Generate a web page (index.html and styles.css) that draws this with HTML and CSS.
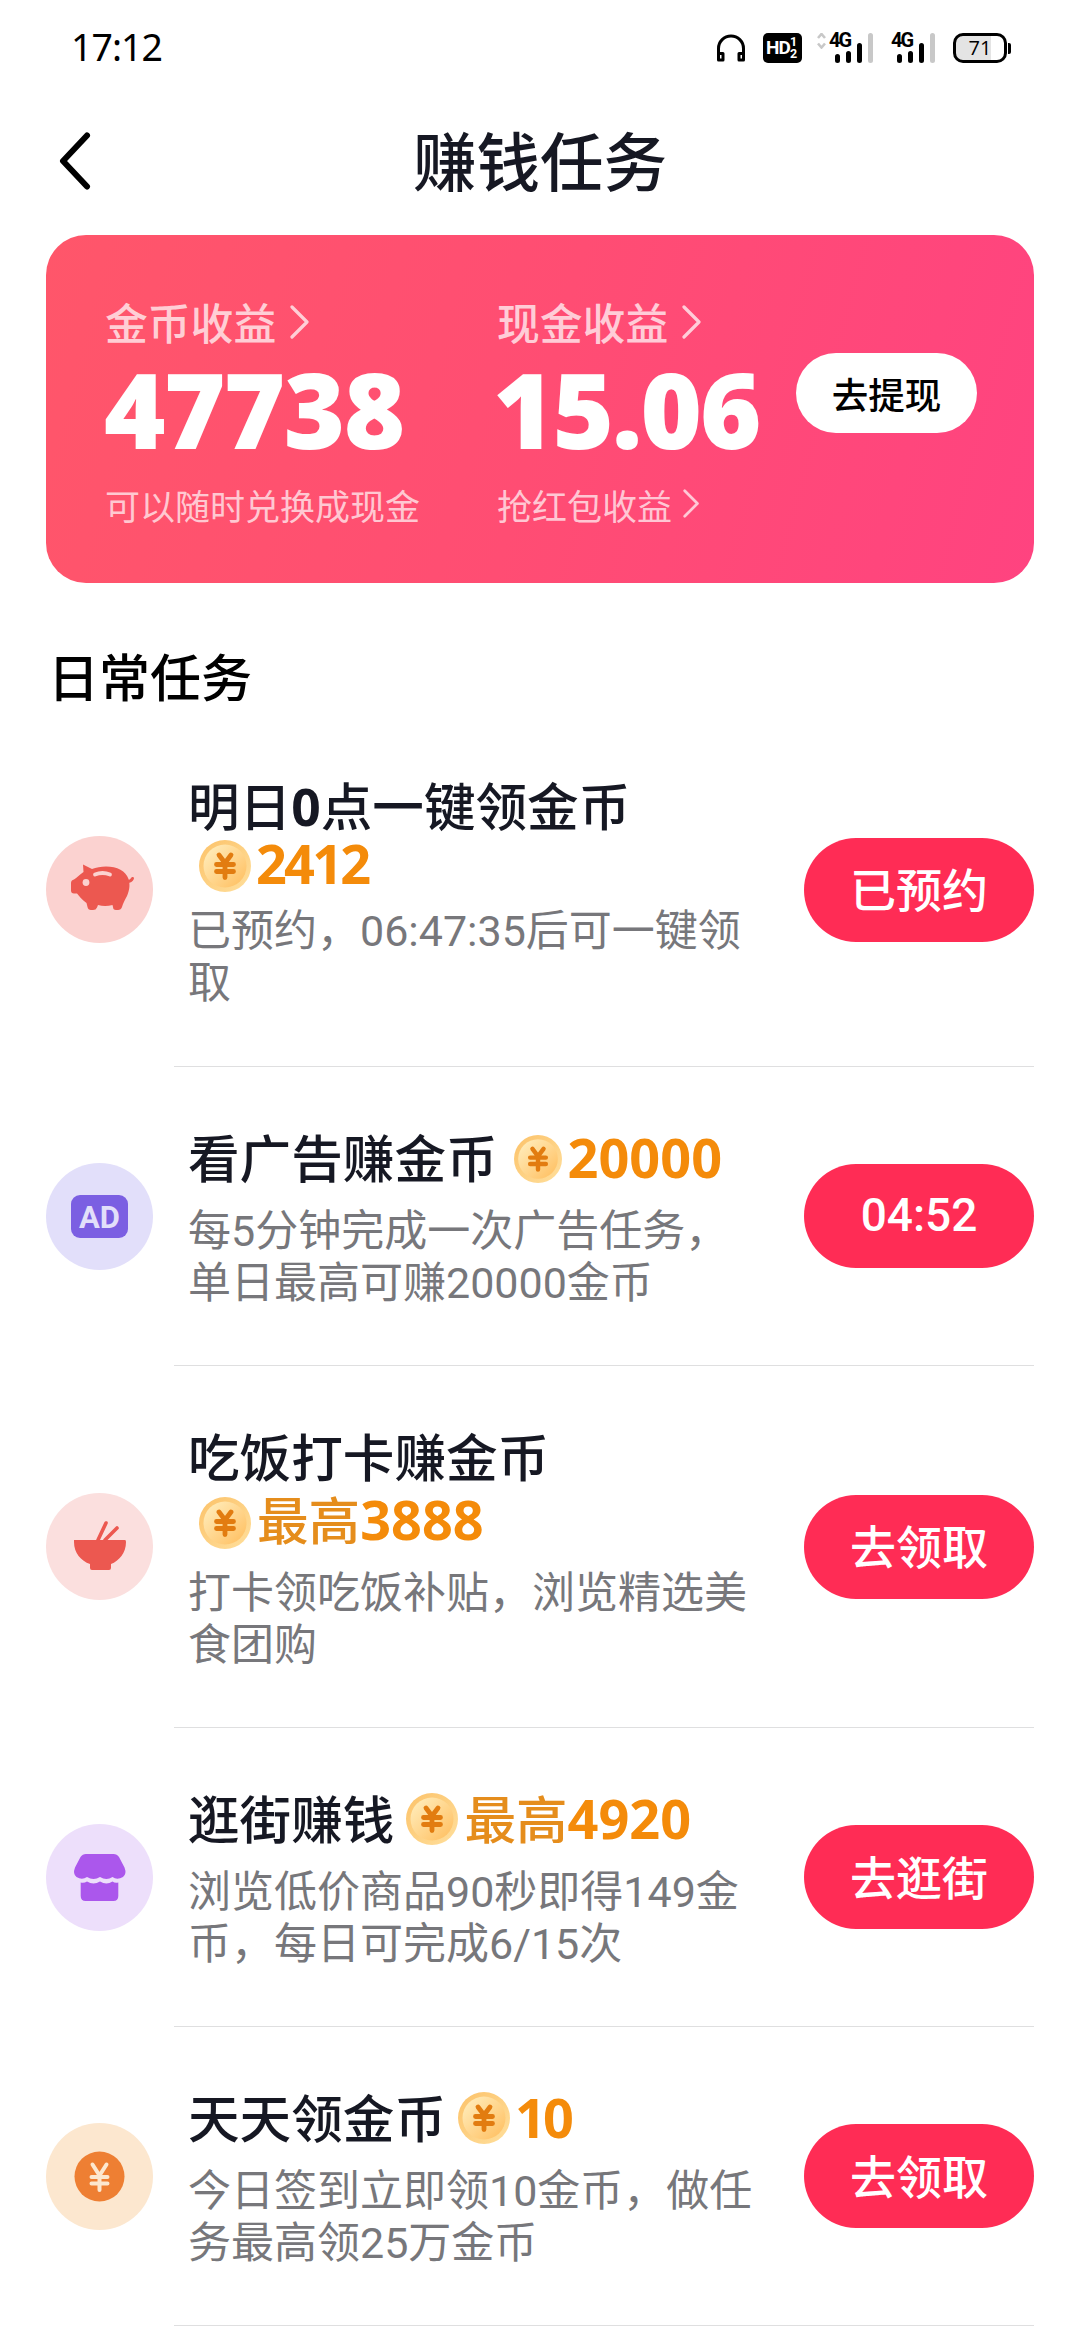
FILE: index.html
```html
<!DOCTYPE html>
<html lang="zh-CN">
<head>
<meta charset="utf-8">
<title>赚钱任务</title>
<link rel="stylesheet" href="styles.css">
</head>
<body>
<svg class="defs" width="0" height="0" aria-hidden="true">
  <defs>
    <linearGradient id="coin-face" x1="0" y1="0" x2="1" y2="1">
      <stop offset="0" stop-color="#fff0c2"/>
      <stop offset="1" stop-color="#ffbd5c"/>
    </linearGradient>
    <linearGradient id="coin-rim" x1="0" y1="0" x2="1" y2="1">
      <stop offset="0" stop-color="#fcc269"/>
      <stop offset="1" stop-color="#ffdf9c"/>
    </linearGradient>
    <symbol id="coin" viewBox="0 0 52 52">
      <circle cx="26" cy="26" r="26" fill="url(#coin-rim)"/>
      <circle cx="26" cy="26" r="21.500" fill="url(#coin-face)"/>
      <path d="M20 15l6 8 6-8M17.500 24.500h17M17.500 31.500h17M26 24v13.500" fill="none" stroke="#e27c10" stroke-width="4.800" stroke-linecap="round" stroke-linejoin="round"/>
    </symbol>
    <symbol id="chevron" viewBox="0 0 20 34">
      <path d="M2 2l15 15L2 32" fill="none" stroke="currentColor" stroke-width="3.200" stroke-linecap="round" stroke-linejoin="round"/>
    </symbol>
    <symbol id="signal" viewBox="0 0 38 30">
      <path d="M2.500 23.500v4M13.500 20.500v7M24.500 12.500v15" stroke="#000" stroke-width="5" stroke-linecap="round"/>
      <path d="M35.500 2.500v25" stroke="#c8c8c8" stroke-width="5" stroke-linecap="round"/>
    </symbol>
  </defs>
</svg>

<header class="status">
  <span class="clock">17:12</span>
  <div class="status-icons">
    <svg class="headphones" viewBox="0 0 28 28"><path d="M1.500 25V14.500a12.500 12.500 0 0 1 25 0V25" fill="none" stroke="#000" stroke-width="3"/><path d="M1.500 19.500h4.500v6.500H1.500zM22 19.500h4.500v6.500H22z" fill="#fff" stroke="#000" stroke-width="3" stroke-linejoin="round"/></svg>
    <span class="hd"><span class="hd-text">HD</span><span class="sims"><i>1</i><i>2</i></span></span>
    <span class="net net-arrows">
      <svg class="arrows" viewBox="0 0 9 16"><path d="M1 5l3.500-4L8 5M1 10.500l3.500 4 3.500-4" fill="none" stroke="#c8c8c8" stroke-width="2.600"/></svg>
      <b>4G</b><svg class="bars"><use href="#signal"/></svg>
    </span>
    <span class="net"><b>4G</b><svg class="bars"><use href="#signal"/></svg></span>
    <span class="battery"><span class="cell">71</span><span class="cap"></span></span>
  </div>
</header>

<nav class="topbar">
  <svg class="back" viewBox="0 0 32 58"><path d="M28 3.500L4 29l24 25.500" fill="none" stroke="#000" stroke-width="6" stroke-linecap="round" stroke-linejoin="round"/></svg>
  <h1>赚钱任务</h1>
</nav>

<section class="wallet">
  <div class="earn">
    <div class="label">金币收益<svg class="chev"><use href="#chevron"/></svg></div>
    <div class="sum">47738</div>
    <div class="hint">可以随时兑换成现金</div>
  </div>
  <div class="earn cash">
    <div class="label">现金收益<svg class="chev"><use href="#chevron"/></svg></div>
    <div class="sum">15.06</div>
    <div class="hint">抢红包收益<svg class="chev small" viewBox="0 0 20 34"><use href="#chevron"/></svg></div>
  </div>
  <button class="withdraw">去提现</button>
</section>

<h2>日常任务</h2>

<main class="tasks">
  <article class="task first">
    <svg class="icon" viewBox="0 0 107 107">
      <circle cx="53.500" cy="53.500" r="53.500" fill="#fbd2d0"/>
      <path d="M37 28.500L46 33C50 31.500 55 30.500 60 30.500C71 30.500 80 35 82.500 43C84 48 84 53 81 60C79 64 77 67 76 71Q75 74 72 74H70Q67 74 67 71L66.500 69Q59 71 52 69L51 71.500Q50 74 47 74H45Q42 74 41.500 71L40.500 67C36 64 33 60 31 57.500H28Q25 57.500 25 54.500V47Q25 44 28 43.500C31 42 33 39 37.500 36Z" fill="#ec5850"/>
      <path d="M80 45.500Q85 46 86.500 42.500" fill="none" stroke="#ec5850" stroke-width="3" stroke-linecap="round"/>
      <path d="M49 38.500Q56.500 35.500 64 38.500" fill="none" stroke="#fbd2d0" stroke-width="3.800" stroke-linecap="round"/>
      <circle cx="40" cy="46.500" r="3.400" fill="#fbd2d0"/>
    </svg>
    <div class="body">
      <h3>明日<b>0</b>点一键领金币<br><svg class="coin"><use href="#coin"/></svg><span class="amount tight">2412</span></h3>
      <p>已预约，06:47:35后可一键领<br>取</p>
    </div>
    <button class="go">已预约</button>
  </article>
  <hr>
  <article class="task">
    <svg class="icon" viewBox="0 0 107 107">
      <circle cx="53.500" cy="53.500" r="53.500" fill="#e2dffa"/>
      <rect x="25" y="32" width="57" height="43" rx="9" fill="#7b5fe2"/>
      <text x="53.500" y="64.500" text-anchor="middle" class="ad">AD</text>
    </svg>
    <div class="body">
      <h3>看广告赚金币<svg class="coin ad-coin" viewBox="0 0 52 52"><use href="#coin"/></svg><span class="amount">20000</span></h3>
      <p>每5分钟完成一次广告任务，<br>单日最高可赚20000金币</p>
    </div>
    <button class="go latin">04:52</button>
  </article>
  <hr>
  <article class="task tall">
    <svg class="icon" viewBox="0 0 107 107">
      <circle cx="53.500" cy="53.500" r="53.500" fill="#fbdfde"/>
      <path d="M28 47h51q1 0 1 2c0 11-7 19-15 22v4q0 2-2 2H46q-2 0-2-2v-4c-9-3-16-11-16-22z" fill="#ec5850"/>
      <path d="M52 47l8-17M59 47l12-12" stroke="#ec5850" stroke-width="3.600" stroke-linecap="round"/>
    </svg>
    <div class="body">
      <h3>吃饭打卡赚金币<br><svg class="coin"><use href="#coin"/></svg><span class="max">最高</span><span class="amount">3888</span></h3>
      <p>打卡领吃饭补贴，浏览精选美<br>食团购</p>
    </div>
    <button class="go">去领取</button>
  </article>
  <hr>
  <article class="task">
    <svg class="icon" viewBox="0 0 107 107">
      <circle cx="53.500" cy="53.500" r="53.500" fill="#eddffb"/>
      <path d="M40 30H67.500Q71 30 73 33L78.500 43.500Q81 50 77 53Q71 56.500 66.500 53Q60.500 57 54 53Q47.500 57 41 53Q36 56.500 30.500 53Q26.500 50 29 43.500L34.500 33Q36.500 30 40 30Z" fill="#ab57ec"/>
      <path d="M34.700 58.500Q38 59.500 41 57.500Q47.500 61.500 54 57.500Q60.500 61.500 66.500 57.500Q69 59.500 72.300 58.500V72Q72.300 77 67.300 77H39.700Q34.700 77 34.700 72Z" fill="#ab57ec"/>
    </svg>
    <div class="body">
      <h3>逛街赚钱<svg class="coin"><use href="#coin"/></svg><span class="max">最高</span><span class="amount">4920</span></h3>
      <p>浏览低价商品90秒即得149金<br>币，每日可完成6/15次</p>
    </div>
    <button class="go">去逛街</button>
  </article>
  <hr>
  <article class="task">
    <svg class="icon" viewBox="0 0 107 107">
      <circle cx="53.500" cy="53.500" r="53.500" fill="#fce7cf"/>
      <circle cx="53.500" cy="53.500" r="25" fill="#ee7f33"/>
      <path d="M46.500 41.500l7 11 7-11M45.500 54h16M45.500 60.500h16M53.500 53v14" fill="none" stroke="#fce7cf" stroke-width="4" stroke-linecap="round" stroke-linejoin="round"/>
    </svg>
    <div class="body">
      <h3>天天领金币<svg class="coin"><use href="#coin"/></svg><span class="amount tight">10</span></h3>
      <p>今日签到立即领10金币，做任<br>务最高领25万金币</p>
    </div>
    <button class="go">去领取</button>
  </article>
  <hr>
</main>
</body>
</html>
```
FILE: styles.css
```css
* { box-sizing: border-box; }
body {
  margin: 0;
  width: 1080px;
  height: 2340px;
  overflow: hidden;
  background: #fff;
  color: #161823;
  font-family: Roboto, "Noto Sans CJK SC", sans-serif;
}
h1, h2, h3, p { margin: 0; font-weight: 500; white-space: nowrap; }
button { border: 0; padding: 0; font: inherit; }
svg { display: block; flex: none; }
.defs { position: absolute; }

/* Status bar */
.status { height: 96px; padding: 0 69px 0 71px; display: flex; justify-content: space-between; align-items: center; color: #000; }
.clock { font: 400 37.5px/1 "Noto Sans", sans-serif; letter-spacing: -1px; margin-top: -2px; }
.status-icons { display: flex; align-items: center; height: 30px; }
.headphones { width: 28px; height: 28px; }
.hd { display: flex; width: 39px; height: 30px; margin-left: 18px; padding-left: 3px; border-radius: 5px; background: #000; color: #fff; align-items: center; white-space: nowrap; }
.hd-text { width: 24px; font: 700 19px/30px Roboto, sans-serif; letter-spacing: -1px; }
.sims { display: flex; flex-direction: column; width: 9px; font: 700 12.5px/12px Roboto, sans-serif; }
.sims i { font-style: normal; }
.net { display: grid; grid-template-columns: 9px 1fr; width: 44px; height: 30px; margin-left: 18px; }
.net b { grid-area: 1 / 1 / 2 / 3; font: 700 20px/15px Roboto, sans-serif; letter-spacing: -2px; }
.bars { grid-area: 1 / 1 / 2 / 3; width: 38px; height: 30px; margin-left: 6px; }
.net-arrows { width: 56px; margin-left: 15px; grid-template-columns: 12px 1fr; }
.net-arrows b, .net-arrows .bars { grid-area: 1 / 2 / 2 / 3; }
.arrows { width: 9px; height: 16px; }
.battery { display: flex; align-items: center; margin-left: 18px; }
.cell { width: 54px; height: 30px; border: 3px solid #000; border-radius: 10px; background: linear-gradient(90deg, #e4e4e4 72%, #fff 72%); font: 400 20px/24px "Open Sans", sans-serif; text-align: center; }
.cap { width: 3px; height: 11px; margin-left: 1px; border-radius: 0 2px 2px 0; background: #000; }

/* Title bar */
.topbar { height: 139px; display: grid; grid-template-columns: 120px 1fr 120px; align-items: center; }
.back { width: 32px; height: 58px; margin: 0 0 10px 59px; }
h1 { text-align: center; font-size: 63.5px; line-height: 90px; margin-top: -1px; }

/* Wallet card */
.wallet {
  height: 348px; margin: 0 46px; padding: 57px 58px 0 59px; border-radius: 40px;
  display: grid; grid-template-columns: 392px 299px 181px;
  background: linear-gradient(105deg, #ff566a 0%, #ff4d73 50%, #ff4380 100%);
  color: #fff; white-space: nowrap;
}
.label { display: flex; align-items: center; height: 58px; font-size: 42.8px; font-weight: 500; color: rgba(255,255,255,.72); }
.chev { width: 20px; height: 34px; margin: 2px 0 0 14px; }
.chev.small { width: 17px; height: 29px; margin: -1px 0 0 11px; }
.sum { height: 118px; font: 900 105px/118px "Noto Sans", sans-serif; letter-spacing: -1.6px; margin-left: -1px; }
.cash .sum { margin-left: -4px; letter-spacing: -2px; }
.hint { display: flex; align-items: center; height: 60px; margin-top: 6px; font-size: 35px; color: rgba(255,255,255,.7); }
.withdraw { width: 181px; height: 80px; margin-top: 61px; border-radius: 40px; background: #fff; color: #000; font-size: 36.5px; font-weight: 500; }

h2 { height: 130px; padding: 63px 0 0 48px; font-size: 51px; line-height: 67px; color: #000; }

/* Task list */
.task { height: 298px; margin: 0 46px; display: grid; grid-template-columns: 142px 616px 230px; align-items: center; }
.task.tall { height: 361px; }
.task.first { height: 353px; }
.icon { width: 107px; height: 107px; }
.ad { font: 700 31px Roboto, sans-serif; fill: #e2dffa; }
.body { align-self: start; padding-top: 60px; }
.first .body { padding-top: 64px; }
h3 { font-family: "Noto Sans", "Noto Sans CJK SC", sans-serif; font-size: 51.6px; line-height: 63px; }
.first h3 { line-height: 58px; }
.coin { display: inline-block; width: 52px; height: 52px; margin: -10px 6px -10px 12px; vertical-align: 4px; }
.first .coin { vertical-align: 2px; margin-left: 11px; }
.tall .coin { vertical-align: 1px; margin-left: 11px; }
.ad-coin { width: 48px; height: 48px; margin-left: 16px; vertical-align: 5px; }
.amount { font-size: 54px; font-weight: 700; line-height: 1px; color: #f48b0a; }
.amount.tight { letter-spacing: -2.8px; margin-left: -1px; }
.max { color: #e58d1c; }
p { margin-top: 15px; font-size: 43px; line-height: 52px; font-weight: 400; color: #77777b; }
.first p { margin-top: 12px; }
.go { width: 230px; height: 104px; padding-bottom: 5px; border-radius: 52px; background: #ff2c55; color: #fff; font-size: 46px; font-weight: 500; }
.go.latin { padding-bottom: 2px; }
hr { height: 1px; margin: 0 46px 0 174px; border: 0; background: #dfdfe0; }
```
